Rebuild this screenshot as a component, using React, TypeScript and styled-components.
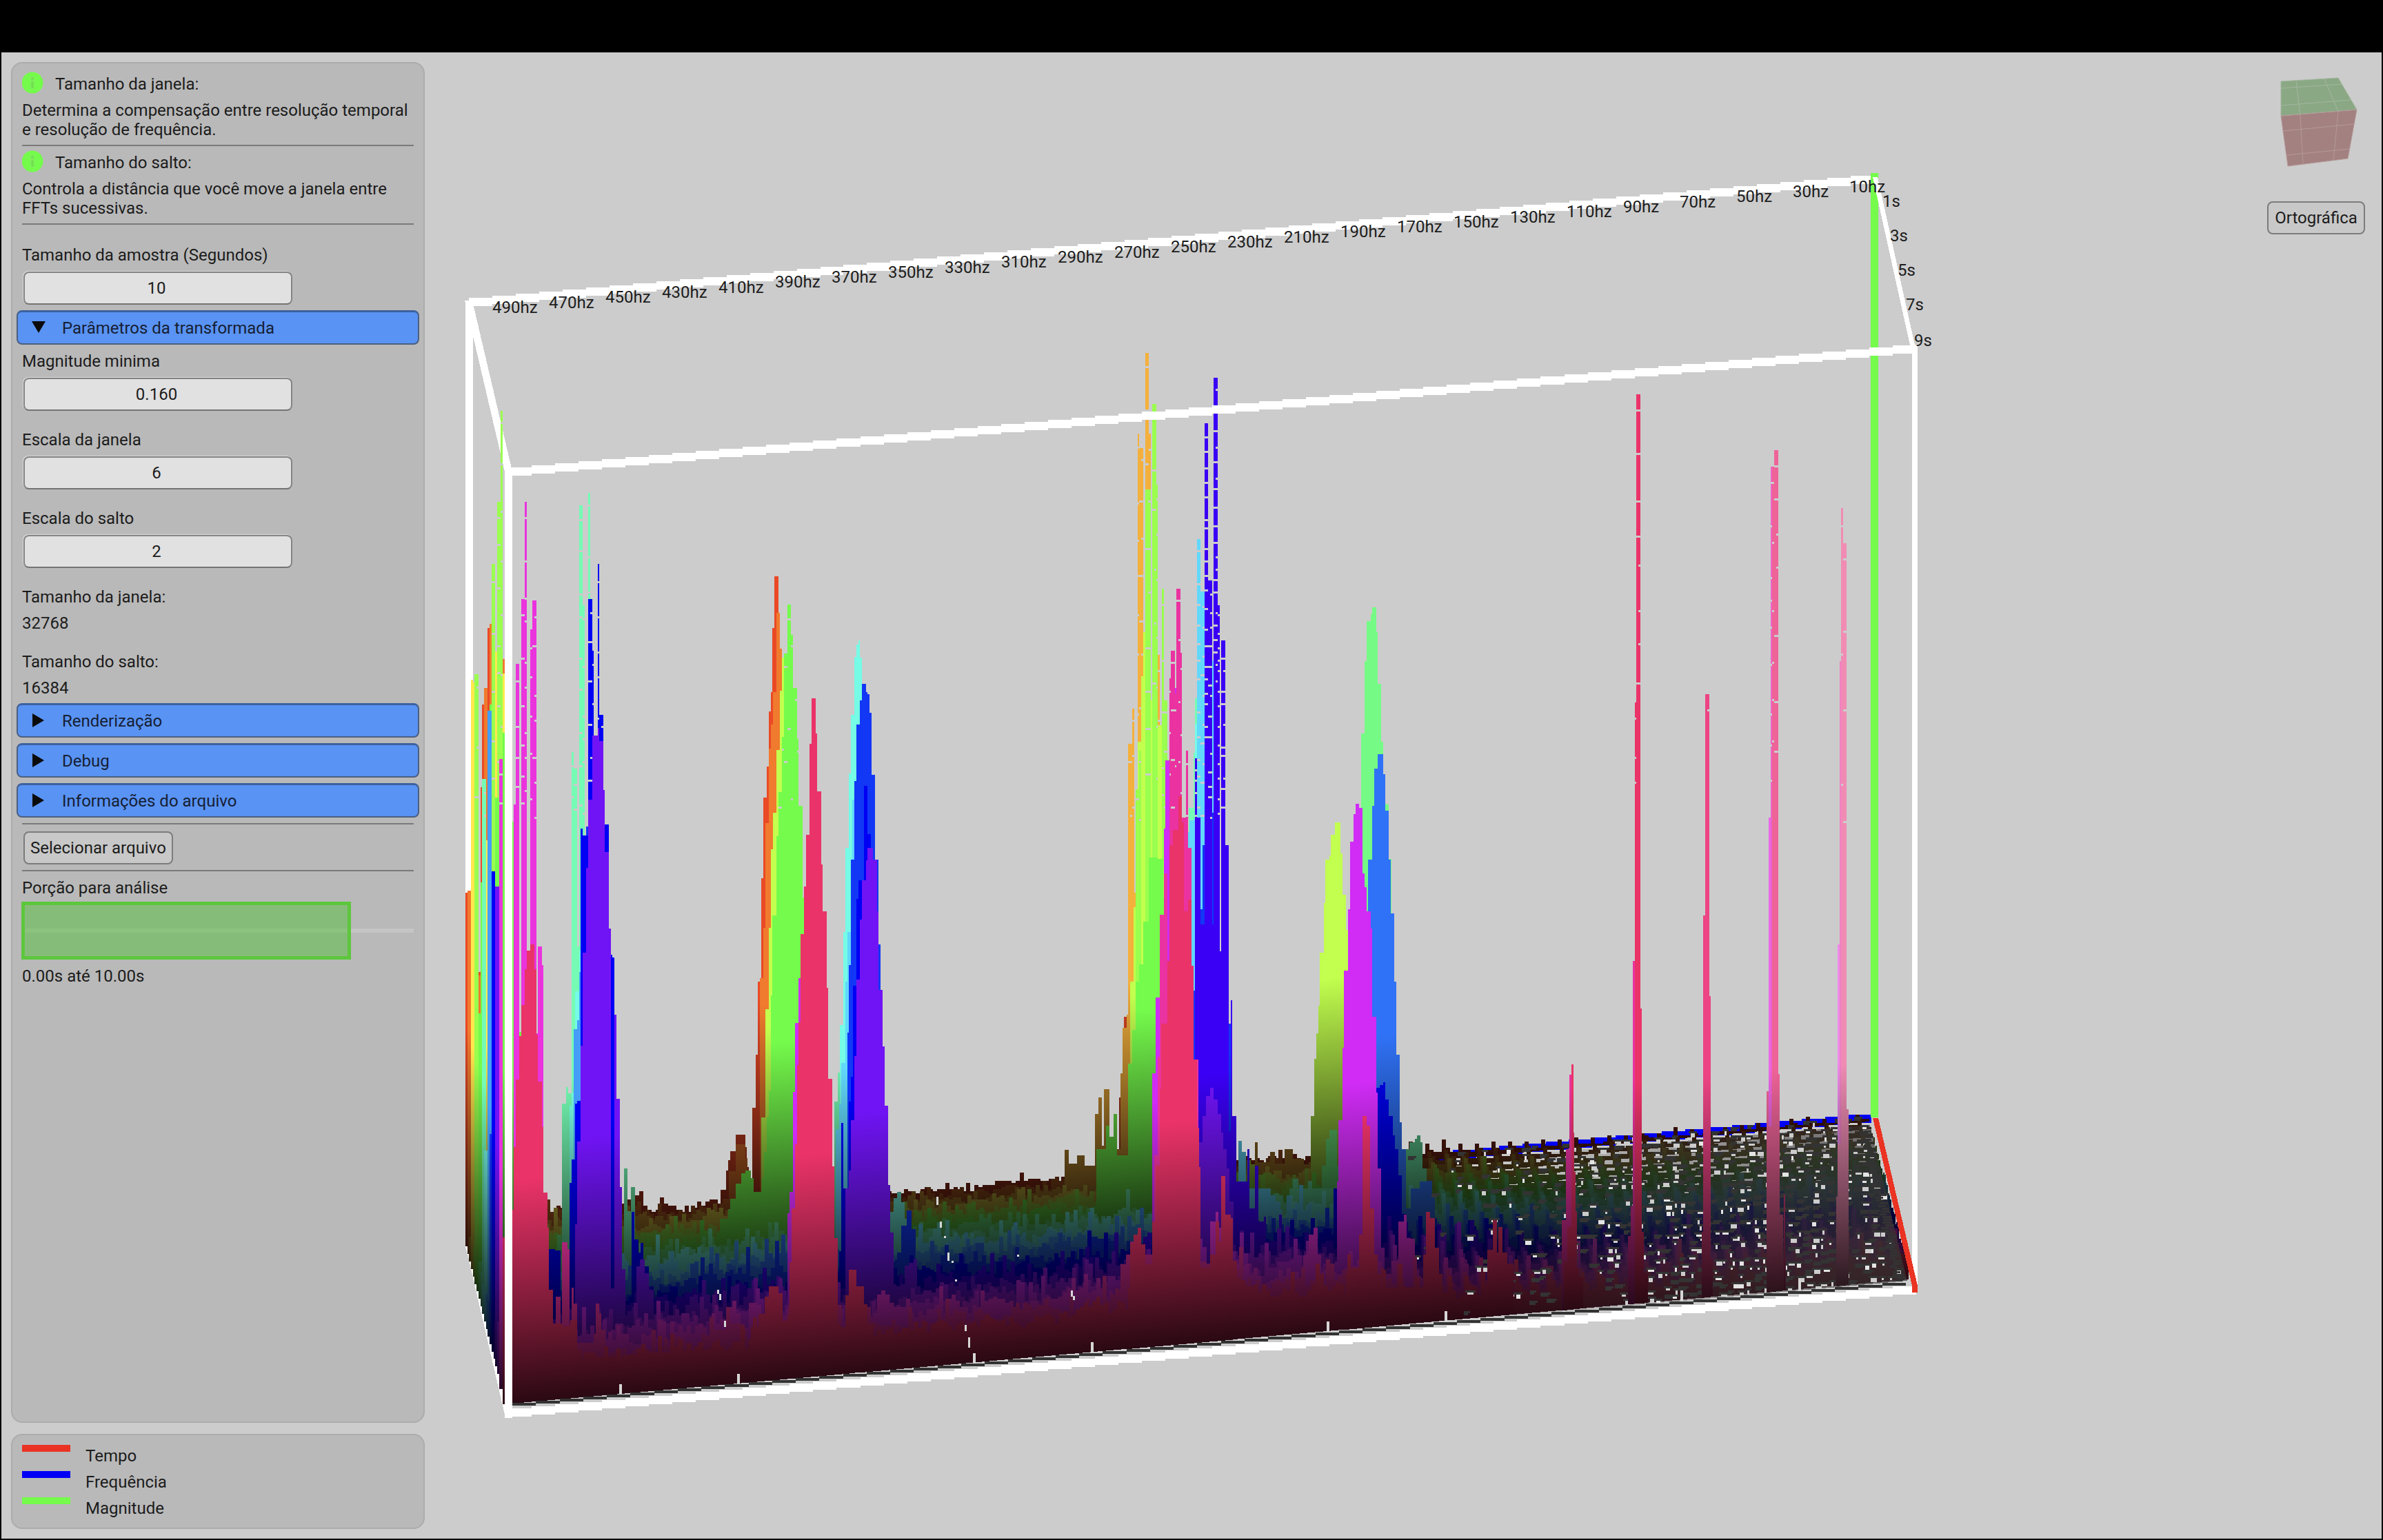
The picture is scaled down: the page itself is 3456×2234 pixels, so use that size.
import React, { useId, useState } from 'react';
import styled, { createGlobalStyle } from 'styled-components';

/* ---------- Spectrogram geometry ---------- */

const SLOPE = 0.0887;
const SLICES = 22;
const FADE = 320;
const sliceX = (i: number) => 675 + 2.7 * i;
const baseY = (i: number, x: number) => 1808 + 10.9 * i - SLOPE * (x - sliceX(i));
const q3 = (v: number) => Math.round(v / 3) * 3;

const PALETTE = [
  '#ea4926', '#f07a2e', '#f4b03c', '#ffe94e', '#c2ff4e', '#9aff4e', '#75fb4c', '#75fb85',
  '#75fbb4', '#75fbe6', '#62d8fb', '#459df8', '#3072f7', '#1237f5', '#0000f5', '#3a00f5',
  '#7014f5', '#a020f5', '#d02cf5', '#ea33dd', '#ea33a0', '#ea3368',
];

const shade = (hex: string, k: number) => {
  const n = parseInt(hex.slice(1), 16);
  const c = [n >> 16, (n >> 8) & 255, n & 255].map((v) => Math.round(v * k));
  return `rgb(${c.join(',')})`;
};

const makeRandom = (seed: number) => () => {
  seed = (seed * 1664525 + 1013904223) >>> 0;
  return seed / 4294967296;
};

type Win = [number, number, number, number];
const WALL: Win = [670, 580, 3, 1.045];
const LOW: Win = [660, 560, 2.24, 1.018];
const MID: Win = [1360, 480, 1.96, 1.045];
const HIGH: Win = [2220, 550, 2.8, 1.568];
const TAIL: Win = [2000, 1480, 1.912, 3];

type Peak = { slice: number; win: Win; steps: string; gap?: number; tint?: string };
const p = (slice: number, win: Win, steps: string, gap?: number, tint?: string): Peak => ({ slice, win, steps, gap, tint });

const PEAKS: Peak[] = [
  p(0, WALL, '15:747 24:1400 72:867 81:587 87:462 96:1400 111:346 120'),
  p(1, WALL, '24:744 39:1400 72:873 81:1400 96:437 111:1400 120:340 129:1400 177:393 186'),
  p(3, WALL, '39:424 48:428 54:1400 105:668 111:1400 144:381 153:1400 177:415 186'),
  p(5, WALL, '54:416 72:1400 129:249 144:1400 153:155 168:17 177', 70),
  p(6, WALL, '72:930 81:732 87:1400 120:462 129:1400 144:603 162:1400 177:505 186:700 219:640 225:1400 249:958 258'),
  p(8, WALL, '87:575 105:1400 435:1067 453:1042 462:1051 477:534 486:559 501:829 510:160 525:311 534:830 549:141 558:301 567', 60),
  p(8, WALL, '705:1165 720:1230 735:1193 753'),
  p(9, WALL, '96:1138 111:1400 468:1070 477:1050 492:897 510:835 525'),
  p(11, WALL, '111:471 129:1400 486:954 501:940 510:867 525'),
  p(13, WALL, '120:1113 129:1400 540:647 549'),
  p(14, WALL, '129:715 144:1400 378:1287 405:1290 429:1400 468:1187 477:1152 492:1067 501:1063 516:650 525:660 549:302 567:380 573:520 591:249 597:478 615:591 621:644 639:801 648:841 654:845 663:932 672', 60),
  p(16, WALL, '144:738 162:1400 492:1250 501:1124 516:979 525:838 540:710 549:606 567:509 591:497 597:517 615:591 621:685 639:801 648:1415 663:932 672:1060 687:1193 696:1318 711'),
  p(19, WALL, '162:544 177:1500 225:613 234:400 249:1000 258:302 273:155 282:1000 297:348 306:304 324:960 330:829 348:857 354:1202 372:1275 378:1350 396', 60),
  p(20, WALL, '408:1360 429:1420 435:1277 459:1287 468:1400 477:1346 486:1370 501:1430 582:1370 597:1385 606:1410 624'),
  p(21, WALL, '177:1270 186:1200 219:1228 225:1133 234:1030 249:965 258:917 273:863 282:835 297:826 315:863 324:962 330:1034 348:1102 354:1202 372:1255 378:1349 396:1400 435:1405 470:1395 500:1440 520'),

  p(0, LOW, '862:1187 880:1158 888:1143 894:1130 912:1106 942:1124 948:1153 954:1200 965:1066 977:987 983:880 995:727 1001:608 1012:562 1019:480 1026:452 1030:357 1037:281 1051:400 1060:600 1070'),
  p(1, LOW, '870:1200 890:1160 912:1120 942:1140 950:1180 960:1240 990:874 1001:800 1008:645 1019:535 1026:500 1033:452 1044:335 1055:388 1062:441 1075:700 1100'),
  p(4, LOW, '995:1080 1008:920 1019:800 1026:684 1033:630 1044:538 1055:450 1062:401 1068:395 1080'),
  p(6, LOW, '860:1230 888:1215 894:1200 912:1178 930:1163 942:1158 960:1170 970:1190 985:1190 997:1170 1004:1131 1012:1080 1019:1040 1026:900 1030:782 1044:665 1051:600 1062:518 1068:395 1080:323 1091:367 1098:446 1111:521 1116:620 1129:755 1145:1000 1160:1200 1180', 180),
  p(18, LOW, '1080:1222 1087:1190 1098:1042 1104:941 1116:874 1130:1000 1140'),
  p(8, LOW, '1232:1057 1243:1014 1250:1000 1256'),
  p(9, LOW, '1250:944 1261:806 1268:682 1279:572 1286:486 1297:400 1304:382 1310:376 1315:401 1322:480 1330:700 1340'),
  p(10, LOW, '1236:1097 1247:1060 1254:1000 1268:880 1275:806 1290:611 1300:583 1310'),
  p(13, LOW, '1275:955 1279:855 1286:699 1297:583 1304:500 1315:464 1322:440 1335:452 1340:455 1346:483 1353:574 1364:699 1375:825 1382:892 1389'),
  p(14, LOW, '1243:1336 1254:1088 1261:1185 1279:1057 1286:1020 1292:886 1304:757 1310:730 1328:590 1340:662 1350'),
  p(16, LOW, '1268:1185 1279:1158 1286:1084 1297:990 1304:877 1315:788 1322:730 1335:700 1340:682 1357:699 1370:776 1375:892 1389:975 1396:1063 1407:1180 1413:1250 1425:1380 1440'),
  p(21, LOW, '960:1390 985:1370 1005:1345 1020:1330 1050:1340 1065:1380 1080:1370 1086:1294 1093:1214 1104:1120 1110:1003 1116:940 1122:809 1133:739 1140:663 1151:528 1158:461 1172:513 1176:599 1189:706 1194:776 1207:889 1212:1023 1225:1152 1232:1258 1243:1390 1268:1343 1279:1305 1304:1330 1328:1356 1340:1385 1360'),
  p(9, LOW, '1413:1220 1425:1199 1436:1190 1450:1205 1461:1230 1475:1260 1490:1300 1500'),
  p(13, LOW, '1436:1280 1450:1240 1468:1218 1482:1245 1497:1300 1505'),
  p(14, LOW, '560:1350 574:1220 582:1260 596:1280 603:1265 612:1300 630:1330 645:1380 655'),
  p(16, LOW, '590:1300 600:1290 615:1310 630:1335 645:1370 655:1400 670:1390 680:1400 1450:1350 1460:1330 1475:1295 1490:1290 1500:1330 1512:1380 1525'),

  p(0, MID, '515:1162 520:1200 530:1040 541:1028 557:852 563'),
  p(2, MID, '361:1241 372:1262 395:1250 418:1265 447:1187 457:1162 466:1235 472:1150 488:1230 500:1240 519:1125 526:1056 537:1037 541:626 553:573 558:852 568:156 573:178 584:900 590:33 600:156 606:900 626:491 631:600 640', 70),
  p(2, MID, '902:1230 910:1260 945:1245 958:1262 985:1240 1010:1255 1040'),
  p(4, MID, '547:987 557:874 568:623 579:524 585:457 590:900 606:560 610:900 626:598 637:690 642'),
  p(5, MID, '563:695 573:636 578:967 590:240 606:900 610:111 622:233 626:800 637:391 642:560 653:650 660', 70),
  p(6, MID, '450:1240 478:1205 488:1222 500:1187 509:1250 541:1111 552:1060 563:987 573:960 584:896 600:798 626:800 640:860 650:1000 660'),
  p(8, MID, '713:723 728:640 731:557 742'),
  p(9, MID, '721:800 731:596 737'),
  p(10, MID, '711:760 715:742 728:740 737:316 747:395 760:420 770:500 795', 40),
  p(10, MID, '855:1228 865:1245 876:1300 946:1310 960:1320 975'),
  p(13, MID, '727:1000 747:877 753:780 780:730 784:1000 800:1050 835:1213 845'),
  p(15, MID, '731:648 737:738 747:900 759:140 769:378 780:900 784:71 796:416 802:940 806:469 817:780 827:1213 833:1015 837:1190 849:1290 880:1240 886:1330 902:1265 912:1350 927:1343 932:1380 970:1340 978', 26),
  p(16, MID, '743:1230 753:1190 763:1160 774:1147 784:1165 796:1187 806:1215 812:1240 822:1270 830:1320 840'),
  p(18, MID, '610:1125 620:1010 631:900 642:755 647:651 658:640 674:541 678:600 694:738 706:880 711'),
  p(20, MID, '519:1415 535:1400 547:1380 560:1400 615:1250 626:1100 631:885 642:822 652:955 658:527 662:485 674:550 678:391 690:488 694:738 706:636 711:784 721:962 727:1105 740', 90),
  p(21, MID, '540:1450 547:1384 557:1370 568:1360 578:1385 590:1415 610:1350 620:1265 631:1150 636:1050 652:955 658:780 668:757 684:705 694:745 700:880 711:862 721:962 727:1105 737:1208 743:1268 747:1420 774:1400 790:1350 800:1380 806:1281 817:1340 833:1345 838:1410 850'),
  p(19, MID, '774:1350 790:1335 797:1360 806'),

  p(4, MID, '1060:1190 1070:1103 1076:1065 1082:1023 1086:943 1098:867 1102:802 1113:795 1117:764 1129:745 1145:792 1151:855 1161:908 1166:970 1180:1100 1200'),
  p(7, MID, '1092:1265 1103:1225 1113:1211 1135:1265 1150:1270 1197:900 1203:610 1213:501 1219:440 1230:430 1235:419 1246:457 1250:535 1260:623 1266:717 1275:718 1281:800 1290'),
  p(8, MID, '1000:1300 1010:1285 1025:1300 1320:1240 1340:1230 1356:1225 1362:1219 1372:1230 1378:1270 1390'),
  p(12, MID, '1223:802 1235:720 1241:664 1250:642 1266:672 1272:727 1282:802 1288:883 1298:987 1303:1097 1313:1200 1319:1240 1330:1330 1345:1300 1370:1290 1390:1288 1405:1310 1413:1350 1425'),
  p(14, MID, '1125:1300 1139:1250 1246:1147 1256:1143 1266:1139 1272:1165 1282:1190 1293:1220 1300:1240 1310:1280 1320:1380 1330'),
  p(18, MID, '1135:1290 1139:1197 1151:1087 1154:970 1166:877 1172:774 1182:733 1188:717 1197:723 1207:822 1213:843 1219:880 1230:906 1235:1040 1246:1155 1250:1270 1260:1390 1270'),
  p(19, MID, '1045:1400 1055:1370 1068:1360 1080:1400 1090:1430 1290:1410 1310:1350 1325:1340 1333:1375 1345:1430 1355'),
  p(21, MID, '1160:1430 1165:1400 1175:1420 1197:1370 1207:1190 1219:1205 1229:1330 1240:1400 1250:1430 1260:1450 1380:1400 1388:1335 1400:1345 1413:1390 1425:1430 1435'),

  p(21, TAIL, '300:1000 315:870 326:1010 331:900 342:1010 356:1060 372'),
  p(21, TAIL, '507:870 518:560 528:237 535', undefined, '#ea33a0'),
  p(21, TAIL, '512:1050 522:900 534:192 539:490 541:660 545:830 549:1080 555:1120 565'),
  p(21, TAIL, '690:940 698:810 704:0 712', undefined, '#ea33a0'),
  p(21, HIGH, '414:1323 423', undefined, '#ea33a0'),
  p(21, HIGH, '423:735 428:34 445:1432 451:2100 456', 60),
  p(21, TAIL, '726:920 735:1100 745'),
  p(21, HIGH, '693:1940 700:1220 708:717 725:1403 731:2000 738', 160, '#ec4484'),
  p(21, HIGH, '966:998 974', undefined, '#e966e8'),
  p(21, HIGH, '974:199 982', 60, '#ed62c8'),
  p(21, HIGH, '958:1620 966:1700 974:1700 980:199 988:162 1005:1580 1012:1900 1024:2000 1035', 80, '#ee6498'),
  p(21, TAIL, '1122:758 1126', undefined, '#ec4484'),
  p(21, HIGH, '1246:1286 1254', undefined, '#ee8ae8'),
  p(21, HIGH, '1254:641 1260', undefined, '#f080c8'),
  p(21, HIGH, '1240:1860 1247:1740 1260:293 1268:373 1282:1660 1290', 160, '#f08cb4'),
];

type Step = [number, number];
const toSteps = ({ win: [ox, oy, kx, ky], steps }: Peak): Step[] =>
  steps.split(' ').map((t) => {
    const [x, y] = t.split(':').map(Number);
    return [Math.round(ox + x / kx), y === undefined ? 0 : Math.round(oy + y / ky)];
  });

const stepPath = (slice: number, steps: Step[]) => {
  const x0 = steps[0][0];
  const b0 = Math.round(baseY(slice, x0));
  let d = `M${x0} ${b0}`;
  steps.slice(0, -1).forEach(([x, y], k) => {
    const floor = Math.round(baseY(slice, x));
    d += `V${Math.min(y, floor)}H${steps[k + 1][0]}`;
  });
  const end = steps[steps.length - 1][0];
  return `${d}V${Math.round(baseY(slice, end))}Z`;
};

const noisePath = (slice: number) => {
  const random = makeRandom(977 + slice * 131);
  const from = Math.round(sliceX(slice));
  const to = from + 2036;
  const t = slice / (SLICES - 1);
  const steps: Step[] = [];
  let level = 1;
  for (let x = from; x < to; x += 6) {
    level = level * 0.55 + (0.6 + random() * 0.8) * 0.45;
    const quiet = Math.min(1, Math.max(0, (x - 1900) / 350));
    const loud = 20 + 34 * Math.min(1, t / 0.6);
    const soft = 5 + 27 * t;
    let h = loud * (1 - quiet) + soft * quiet;
    h += (10 + 24 * t) * Math.exp(-Math.abs(x - 1740) / 110);
    h += 26 * (1 - t) * Math.exp(-Math.abs(x - 820) / 140);
    h += 14 * Math.exp(-Math.abs(x - 1130) / 100);
    h *= level + (random() > 0.8 ? 0.55 * random() : 0);
    const phase = (x - from) % 24;
    if (quiet > 0.2) h = h * (phase < 6 ? 1.5 : phase < 12 ? 1.1 : 0.8) + (phase < 6 ? 5 : 0);
    steps.push([x, q3(baseY(slice, x) - h)]);
  }
  steps.push([to, 0]);
  return stepPath(slice, steps);
};

type Cell = { x: number; y: number; w: number; h: number; fill: string };

const gapCells = (peak: Peak, index: number): Cell[] => {
  if (!peak.gap) return [];
  const random = makeRandom(41 + index * 57);
  const cells: Cell[] = [];
  const steps = toSteps(peak);
  steps.slice(0, -1).forEach(([x, y], k) => {
    const w = steps[k + 1][0] - x;
    if (w > 12 || y > 1150) return;
    const stop = Math.min(y + 460, 1190);
    for (let cy = y + 14 + random() * 12; cy < stop; cy += peak.gap! * (0.55 + random() * 0.7)) {
      const half = random() > 0.5 && w > 5;
      cells.push({ x: half ? x + Math.floor(w / 2) : x, y: q3(cy), w: half ? Math.ceil(w / 2) : w, h: 3, fill: '#cccccc' });
    }
  });
  return cells;
};

const floorCells = (): Cell[] => {
  const random = makeRandom(2024);
  const cells: Cell[] = [];
  for (let i = 0; i < SLICES; i += 1) {
    for (let x = 2040; x < sliceX(i) + 2036; x += 24) {
      const density = Math.min(0.7, 0.04 + (x - 2040) / 700);
      for (let n = 0; n < 2; n += 1) {
        if (random() > density) continue;
        const cx = Math.round(x + n * 12 + random() * 6);
        if (cx > sliceX(i) + 2026) continue;
        const cy = q3(baseY(i, cx) - 3 - random() * 4);
        const w = 3 + Math.floor(random() * 3) * 3;
        cells.push({ x: cx - 3, y: cy - 3, w: w + 6, h: 3, fill: '#333333' });
        if (random() > 0.45) cells.push({ x: cx, y: cy, w, h: random() > 0.5 ? 6 : 3, fill: random() > 0.3 ? '#cccccc' : '#e4e4e4' });
        else cells.push({ x: cx - 3, y: cy, w: w + 3, h: 3, fill: '#333333' });
      }
    }
  }
  for (let y = 1640; y < 1860; y += 4) {
    const edge = 2716 + ((y - 1624) * 57) / 246;
    cells.push({ x: Math.round(edge - 16 - random() * 8), y, w: 10 + Math.floor(random() * 4), h: 3, fill: '#333333' });
  }
  for (let x = 898; x < 2740; x += 171) {
    cells.push({ x, y: Math.round(baseY(21, x) - 14), w: 4, h: 20, fill: '#d6d6d6' });
  }
  [[1358, 1736, 12], [1363, 1772, 9], [1369, 1793, 3], [1374, 1817, 12], [1380, 1829, 3], [1385, 1856, 3],
    [1399, 1922, 9], [1404, 1940, 15], [1040, 1871, 6], [1043, 1877, 9], [1050, 1916, 9], [1553, 1872, 9],
    [1556, 1880, 6], [1475, 1820, 3]].forEach(([x, y, h]) => cells.push({ x, y, w: 3, h, fill: '#d6d6d6' }));
  return cells;
};

/* Near-horizontal edge rasterised in three-pixel rows. */
const edgePath = (x1: number, y1: number, x2: number, y2: number, thick: number) => {
  const top: string[] = [];
  const bottom: string[] = [];
  const n = Math.max(1, Math.round(Math.abs(y2 - y1) / 3));
  for (let k = 0; k < n; k += 1) {
    const a = Math.round(x1 + ((x2 - x1) * k) / n);
    const b = Math.round(x1 + ((x2 - x1) * (k + 1)) / n);
    const y = q3(y1 + ((y2 - y1) * (k + 0.5)) / n);
    top.push(`${a} ${y - thick / 2} ${b} ${y - thick / 2}`);
    bottom.unshift(`${b} ${y + thick / 2} ${a} ${y + thick / 2}`);
  }
  return `M${top.join(' ')} ${bottom.join(' ')}Z`;
};

const FREQUENCIES = Array.from({ length: 25 }, (_, k) => 490 - 20 * k);
const TIMES: [string, number, number][] = [
  ['1s', 2730, 300], ['3s', 2741, 350], ['5s', 2752, 400], ['7s', 2764, 450], ['9s', 2776, 502],
];
const TINTS = Array.from(new Set(PEAKS.filter((k) => k.tint).map((k) => k.tint as string)));
const CELLS = floorCells();
const NOISE = PALETTE.map((_, i) => noisePath(i));

const ShadeGradient = ({ id, color, slice }: { id: string; color: string; slice: number }) => {
  const x = sliceX(slice);
  const y = baseY(slice, x);
  return (
    <linearGradient id={id} gradientUnits="userSpaceOnUse" x1={x} y1={y} x2={x - FADE * SLOPE} y2={y - FADE}>
      <stop offset="0" stopColor={shade(color, 0.18)} />
      <stop offset="1" stopColor={color} />
    </linearGradient>
  );
};

const Cells = ({ items }: { items: Cell[] }) => (
  <>
    {items.map((c, k) => (
      <rect key={k} x={c.x} y={c.y} width={c.w} height={c.h} fill={c.fill} />
    ))}
  </>
);

const Spectrogram = () => (
  <Scene viewBox="616 90 2672 2128" role="img" aria-label="Espectrograma">
    <defs>
      {PALETTE.map((c, i) => (
        <ShadeGradient key={c} id={`slice-${i}`} color={c} slice={i} />
      ))}
      {TINTS.map((c) => (
        <ShadeGradient key={c} id={`tint-${c.slice(1)}`} color={c} slice={21} />
      ))}
      <linearGradient id="quiet" gradientUnits="userSpaceOnUse" x1="2150" y1="0" x2="2760" y2="0">
        <stop offset="0" stopColor="#383434" stopOpacity="0" />
        <stop offset="1" stopColor="#383434" stopOpacity="0.7" />
      </linearGradient>
    </defs>
    <g shapeRendering="crispEdges">
      <g fill="#ffffff">
        <path d={edgePath(680, 440, 2718, 259, 12)} />
        <path d="M675 440h11v1370h-11z" />
        <path d="M674 436h11l58 248h-11z" />
        <path d="M675 1806h6l58 246h-7z" />
      </g>
      <path d={edgePath(690, 1802, 2714, 1622, 12)} fill="#0000f5" />
      {PALETTE.map((c, i) => (
        <g key={c}>
          <path d={NOISE[i]} fill={`url(#slice-${i})`} />
          {i === SLICES - 1 && (
            <>
              <path d="M2150 1680L2712 1632L2766 1858L2150 1913Z" fill="url(#quiet)" />
              <Cells items={CELLS} />
            </>
          )}
          {PEAKS.map((peak, k) =>
            peak.slice === i ? (
              <g key={k}>
                <path d={stepPath(i, toSteps(peak))} fill={peak.tint ? `url(#tint-${peak.tint.slice(1)})` : `url(#slice-${i})`} />
                <Cells items={gapCells(peak, k)} />
              </g>
            ) : null,
          )}
        </g>
      ))}
      <path d={edgePath(743, 2039, 2764, 1861, 4)} fill="#333333" />
      <path d="M2713 251h11v1370h-11z" fill="#75fb4c" />
      <g fill="#ffffff">
        <path d="M2716 257h7l55 248h-7z" />
        <path d={edgePath(737, 687, 2779, 506, 12)} />
        <path d={edgePath(737, 2051, 2779, 1872, 12)} />
        <path d="M732 682h11v1375h-11z" />
        <path d="M2773 500h8v1370h-8z" />
      </g>
      <path d="M2716 1622h8l57 243v10h-8v-10z" fill="#ea3323" />
    </g>
    {FREQUENCIES.map((f, k) => (
      <AxisLabel key={f} x={714 + 82 * k} y={454 - Math.round(7.3 * k)}>{f}hz</AxisLabel>
    ))}
    {TIMES.map(([label, x, y]) => (
      <AxisLabel key={label} x={x} y={y}>{label}</AxisLabel>
    ))}
  </Scene>
);

/* ---------- Styles ---------- */

const GlobalStyle = createGlobalStyle`
  *, *::before, *::after { box-sizing: border-box; }
  body {
    margin: 0;
    background: #000000;
    color: #1c1c1c;
    font-family: Roboto, "Liberation Sans", sans-serif;
    font-size: 24px;
    line-height: 28px;
  }
  button, input { font: inherit; color: inherit; margin: 0; }
  p, h2, dl, dt, dd, ul { margin: 0; padding: 0; font-size: inherit; font-weight: inherit; }
`;

const Shell = styled.div`
  display: flex;
  flex-direction: column;
  min-height: 100vh;
`;

const TitleBar = styled.header`
  height: 76px;
  background: #000000;
`;

const Workspace = styled.main`
  flex: 1;
  display: grid;
  grid-template-columns: 600px minmax(0, 1fr) 142px;
  align-items: stretch;
  padding: 14px 24px 14px 14px;
  margin: 0 2px 2px;
  background: #cccccc;
`;

const Sidebar = styled.aside`
  display: flex;
  flex-direction: column;
  gap: 16px;
`;

const Panel = styled.section<{ $grow?: boolean }>`
  display: flex;
  flex-direction: column;
  flex: ${(props) => (props.$grow ? 1 : 'none')};
  padding: ${(props) => (props.$grow ? '12px 6px' : '14px')};
  border: 2px solid #acacac;
  border-radius: 16px;
  background: #b9b9b9;
`;

const Body = styled.div<{ $top?: number }>`
  display: flex;
  flex-direction: column;
  gap: 10px;
  margin-top: ${(props) => props.$top ?? 0}px;
  padding: 0 8px;
`;

const Hint = styled.div`
  display: flex;
  align-items: flex-end;
  gap: 16px;
  height: 32px;
`;

const Rule = styled.hr<{ $top?: number; $bottom?: number }>`
  width: calc(100% - 16px);
  height: 2px;
  margin: ${(props) => props.$top ?? 8}px 8px ${(props) => props.$bottom ?? 6}px;
  border: 0;
  background: #7a7a7a;
`;

const NumberInput = styled.input`
  width: 390px;
  height: 48px;
  margin-left: 2px;
  padding: 0 4px 0 0;
  border: 2px solid #858585;
  border-bottom-color: #747474;
  border-radius: 8px;
  background: #e1e1e1;
  box-shadow: -1px -1px 1px #dadada;
  text-align: center;
`;

const SectionToggle = styled.button<{ $top?: number }>`
  display: flex;
  align-items: center;
  gap: 24px;
  height: 50px;
  margin-top: ${(props) => props.$top ?? 8}px;
  padding: 0 20px;
  border: 2px solid #4c5f80;
  border-top: 3px solid #3c619f;
  border-radius: 8px;
  background: #5993f3;
  color: #162033;
  text-align: left;
`;

const PushButton = styled.button`
  align-self: flex-start;
  height: 48px;
  padding: 0 8px;
  border: 2px solid #7c7c7c;
  border-radius: 8px;
  background: #c8c8c8;
  white-space: nowrap;
`;

const FileRow = styled.div`
  display: flex;
  margin-top: 4px;
  padding: 0 10px;
`;

const Range = styled.div`
  display: grid;
  grid-template-columns: 478px 1fr;
  align-items: center;
  height: 84px;
  margin: -4px 0 0 -1px;
`;

const Selection = styled.div`
  display: flex;
  align-items: center;
  height: 84px;
  border: 5px solid #5dc73c;
  background: #86bc79;
`;

const Silence = styled.div<{ $selected?: boolean }>`
  flex: 1;
  height: 6px;
  background: ${(props) => (props.$selected ? '#8cc47f' : '#c5c5c5')};
`;

const LegendList = styled.ul`
  display: flex;
  flex-direction: column;
  gap: 8px;
  list-style: none;
`;

const LegendItem = styled.li`
  display: flex;
  align-items: flex-end;
  gap: 22px;
  height: 30px;
`;

const Swatch = styled.span<{ $color: string }>`
  align-self: flex-start;
  width: 70px;
  height: 10px;
  background: ${(props) => props.$color};
`;

const Scene = styled.svg`
  display: block;
  width: 100%;
`;

const AxisLabel = styled.text`
  font-family: Roboto, "Liberation Sans", sans-serif;
  font-size: 24px;
  fill: #1c1c1c;
`;

const ViewControls = styled.div`
  display: flex;
  flex-direction: column;
  gap: 10px;
`;

const CubeDrawing = styled.svg`
  display: block;
  width: 142px;
  height: 192px;
`;

const ViewButton = styled(PushButton)`
  align-self: stretch;
  padding: 0 4px;
`;

/* ---------- Controls ---------- */

const InfoIcon = () => (
  <svg width="32" height="32" viewBox="0 0 32 32" aria-hidden="true">
    <circle cx="15" cy="16" r="15.5" fill="#75fb4c" />
    <rect x="13" y="8" width="4" height="4" rx="1" fill="#6be346" stroke="#8ae06e" />
    <rect x="13" y="14" width="4" height="10" rx="1" fill="#6be346" stroke="#8ae06e" />
  </svg>
);

const Arrow = ({ open }: { open: boolean }) => (
  <svg width="20" height="24" viewBox="0 0 20 24" aria-hidden="true">
    <path d={open ? 'M0 2H20L10 19Z' : 'M1 1L18 11L1 21Z'} fill="#0b0b0b" />
  </svg>
);

const Toggle = ({ label, open = false, top }: { label: string; open?: boolean; top?: number }) => {
  const [expanded, setExpanded] = useState(open);
  return (
    <SectionToggle type="button" aria-expanded={expanded} onClick={() => setExpanded(!expanded)} $top={top}>
      <Arrow open={expanded} />
      {label}
    </SectionToggle>
  );
};

const Field = ({ label, value, top }: { label: string; value: string; top: number }) => {
  const id = useId();
  return (
    <Body $top={top}>
      <label htmlFor={id}>{label}</label>
      <NumberInput id={id} defaultValue={value} inputMode="decimal" />
    </Body>
  );
};

const Reading = ({ label, value }: { label: string; value: string }) => (
  <Body as="dl" $top={28}>
    <dt>{label}</dt>
    <dd>{value}</dd>
  </Body>
);

const NavigationCube = () => (
  <CubeDrawing viewBox="3288 90 142 192" role="img" aria-label="Orientação">
    <path d="M3308 118L3391 113L3418 159L3308 168Z" fill="#8aa884" />
    <path d="M3308 168L3418 159L3405 230L3318 241Z" fill="#a38180" />
    <g fill="none" stroke="#a3b79f" strokeWidth="1">
      <path d="M3308 118L3391 113L3418 159L3308 168ZM3308 128L3396 122M3308 153L3410 145M3330 117L3336 167M3371 115L3391 161" />
    </g>
    <g fill="none" stroke="#b59a99" strokeWidth="1">
      <path d="M3308 168L3418 159L3405 230L3318 241ZM3311 190L3414 180M3316 225L3408 216M3336 167L3340 238M3391 162L3384 233" />
    </g>
  </CubeDrawing>
);

const LEGEND = [
  { label: 'Tempo', color: '#ea3323' },
  { label: 'Frequência', color: '#0000f5' },
  { label: 'Magnitude', color: '#75fb4c' },
];

export default function App() {
  return (
    <>
      <GlobalStyle />
      <Shell>
        <TitleBar />
        <Workspace>
          <Sidebar>
            <Panel $grow>
              <Body>
                <Hint><InfoIcon /><h2>Tamanho da janela:</h2></Hint>
                <p>Determina a compensação entre resolução temporal<br />e resolução de frequência.</p>
              </Body>
              <Rule />
              <Body>
                <Hint><InfoIcon /><h2>Tamanho do salto:</h2></Hint>
                <p>Controla a distância que você move a janela entre<br />FFTs sucessivas.</p>
              </Body>
              <Rule $bottom={2} />
              <Field label="Tamanho da amostra (Segundos)" value="10" top={28} />
              <Toggle label="Parâmetros da transformada" open />
              <Field label="Magnitude minima" value="0.160" top={10} />
              <Field label="Escala da janela" value="6" top={28} />
              <Field label="Escala do salto" value="2" top={28} />
              <Reading label="Tamanho da janela:" value="32768" />
              <Reading label="Tamanho do salto:" value="16384" />
              <Toggle label="Renderização" />
              <Toggle label="Debug" />
              <Toggle label="Informações do arquivo" />
              <Rule />
              <FileRow><PushButton type="button">Selecionar arquivo</PushButton></FileRow>
              <Rule />
              <Body $top={4}>
                <p>Porção para análise</p>
                <Range>
                  <Selection><Silence $selected /></Selection>
                  <Silence />
                </Range>
                <p>0.00s até 10.00s</p>
              </Body>
            </Panel>
            <Panel>
              <LegendList>
                {LEGEND.map((item) => (
                  <LegendItem key={item.label}><Swatch $color={item.color} />{item.label}</LegendItem>
                ))}
              </LegendList>
            </Panel>
          </Sidebar>
          <Spectrogram />
          <ViewControls>
            <NavigationCube />
            <ViewButton type="button">Ortográfica</ViewButton>
          </ViewControls>
        </Workspace>
      </Shell>
    </>
  );
}
